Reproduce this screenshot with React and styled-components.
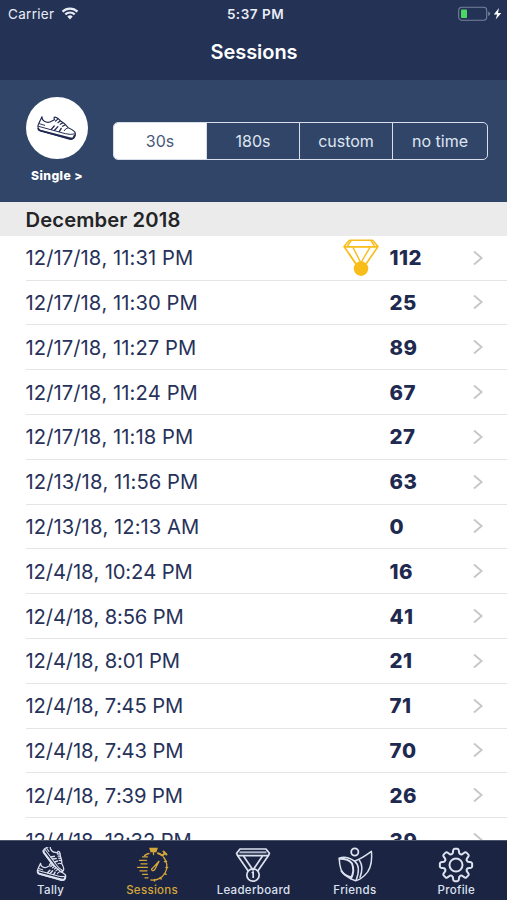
import React from "react";
import styled, { createGlobalStyle, ThemeProvider } from "styled-components";

const theme = {
  font: `Inter, "Liberation Sans", sans-serif`,
  colors: {
    header: "#243255",
    panel: "#314569",
    tabBar: "#1b2442",
    text: "#27325a",
    score: "#1f2a50",
    gold: "#f8bd18",
    activeTab: "#d5a63a",
    tab: "#dce2ef",
    white: "#ffffff"
  }
};

const sessions = [
  { date: "12/17/18, 11:31 PM", score: 112, best: true },
  { date: "12/17/18, 11:30 PM", score: 25 },
  { date: "12/17/18, 11:27 PM", score: 89 },
  { date: "12/17/18, 11:24 PM", score: 67 },
  { date: "12/17/18, 11:18 PM", score: 27 },
  { date: "12/13/18, 11:56 PM", score: 63 },
  { date: "12/13/18, 12:13 AM", score: 0 },
  { date: "12/4/18, 10:24 PM", score: 16 },
  { date: "12/4/18, 8:56 PM", score: 41 },
  { date: "12/4/18, 8:01 PM", score: 21 },
  { date: "12/4/18, 7:45 PM", score: 71 },
  { date: "12/4/18, 7:43 PM", score: 70 },
  { date: "12/4/18, 7:39 PM", score: 26 },
  { date: "12/4/18, 12:32 PM", score: 39 }
];

const durations = ["30s", "180s", "custom", "no time"];

const GlobalStyle = createGlobalStyle`
  * {
    box-sizing: border-box;
  }

  body {
    margin: 0;
    overflow: hidden;
  }

  svg {
    display: block;
    flex: none;
  }
`;

const Screen = styled.div`
  display: flex;
  flex-direction: column;
  width: 507px;
  height: 900px;
  overflow: hidden;
  background: ${props => props.theme.colors.white};
  font-family: ${props => props.theme.font};
`;

const Header = styled.header`
  flex: none;
  height: 80px;
  color: ${props => props.theme.colors.white};
  background: ${props => props.theme.colors.header};
`;

const StatusBar = styled.div`
  display: grid;
  grid-template-columns: 1fr auto 1fr;
  align-items: center;
  height: 27px;
  padding: 0 5px 0 8px;
  font-size: 13.5px;
  color: #e9edf6;
`;

const Carrier = styled.div`
  display: flex;
  align-items: center;
  gap: 7px;
  letter-spacing: 0.3px;
`;

const Clock = styled.div`
  padding-left: 1px;
  font-weight: 600;
  letter-spacing: 0.5px;
`;

const Power = styled.div`
  display: flex;
  justify-content: flex-end;
`;

const Title = styled.h1`
  margin: 0;
  padding-left: 1px;
  font-size: 20px;
  font-weight: 600;
  line-height: 50px;
  letter-spacing: -0.05px;
  text-align: center;
`;

const FilterPanel = styled.section`
  display: flex;
  flex: none;
  height: 121.5px;
  padding: 17px 19px 0 26px;
  background: ${props => props.theme.colors.panel};
`;

const ModeButton = styled.button`
  display: flex;
  flex-direction: column;
  align-items: center;
  width: 62px;
  padding: 0;
  border: 0;
  background: none;
  color: ${props => props.theme.colors.white};
  font: 800 12.2px/16px ${props => props.theme.font};
  letter-spacing: 0.4px;
  white-space: nowrap;
`;

const ModeCircle = styled.span`
  display: flex;
  align-items: center;
  justify-content: center;
  width: 62px;
  height: 62px;
  margin-bottom: 9px;
  border-radius: 50%;
  background: ${props => props.theme.colors.white};
`;

const Segments = styled.div`
  display: grid;
  grid-template-columns: 92px 93px 93px 1fr;
  flex: 1;
  height: 38px;
  margin: 25px 0 0 25px;
  overflow: hidden;
  border: 1.5px solid #d9dfea;
  border-radius: 5px;
`;

const Segment = styled.button`
  padding: 0;
  border: 0;
  border-left: ${props => (props.$first ? "0" : "1.5px solid #d9dfea")};
  background: ${props => (props.$active ? props.theme.colors.white : "transparent")};
  color: ${props => (props.$active ? "#485879" : "#dfe6f2")};
  font: 400 16px/1 ${props => props.theme.font};
`;

const MonthHeading = styled.h2`
  flex: none;
  height: 34px;
  margin: 0;
  padding-left: 25.5px;
  background: #ebebeb;
  color: #242426;
  font-size: 20.2px;
  font-weight: 600;
  line-height: 36px;
  letter-spacing: 0.12px;
`;

const SessionList = styled.ul`
  flex: 1;
  min-height: 0;
  margin: 0;
  padding: 0.3px 0 0 25.5px;
  overflow: hidden;
  list-style: none;
`;

const SessionRow = styled.li`
  display: grid;
  grid-template-columns: 317px 47px 83px 1fr;
  align-items: center;
  height: 44.8px;
  border-bottom: 1px solid #e5e5e8;
  color: ${props => props.theme.colors.text};
  font-kerning: none;
`;

const SessionDate = styled.span`
  font-size: 20.2px;
  letter-spacing: ${props => (props.$long ? "0.06px" : "-0.13px")};
`;

const Score = styled.strong`
  color: ${props => props.theme.colors.score};
  font-size: 20.4px;
  font-weight: 800;
  letter-spacing: 0.5px;
`;

const TabBar = styled.nav`
  display: grid;
  grid-template-columns: repeat(5, 1fr);
  flex: none;
  height: 60px;
  border-top: 1px solid #4c536b;
  background: ${props => props.theme.colors.tabBar};
`;

const Tab = styled.button`
  display: flex;
  flex-direction: column;
  align-items: center;
  padding: 6px 0 0;
  border: 0;
  background: none;
  color: ${props => (props.$active ? props.theme.colors.activeTab : props.theme.colors.tab)};
  font: 500 11.5px/14px ${props => props.theme.font};
  letter-spacing: 0.3px;
`;

const TabIcon = styled.span`
  height: 36px;
`;

const WifiIcon = () => (
  <svg width="18" height="13" viewBox="0 0 17 13" fill="none" stroke="currentColor" strokeWidth="2.2">
    <path d="M1 4.6a10.8 10.8 0 0 1 15 0M3.8 7.4a6.8 6.8 0 0 1 9.4 0" />
    <path d="M5.8 9.6a4 4 0 0 1 5.4 0L8.5 12.4Z" fill="currentColor" stroke="none" />
  </svg>
);

const BatteryIcon = () => (
  <svg width="44" height="16" viewBox="0 0 44 16">
    <rect x="0.7" y="1.2" width="28" height="13" rx="3.2" fill="none" stroke="#77819a" strokeWidth="1.1" />
    <path d="M30.2 5.5V10q2-.8 2-2.25T30.2 5.5Z" fill="#77819a" />
    <rect x="3" y="3.5" width="6" height="8.5" rx="0.8" fill="#4bd763" />
    <path d="M41 2 35.8 8.4h3.3l-1.4 5L43.3 6.9H40Z" fill="#fff" />
  </svg>
);

// Sneaker outline shared by the mode button and the Tally tab
const ShoeShape = ({ weight = 1, fill = "none" }) => (
  <g fill="none" stroke="currentColor" strokeLinecap="round" strokeLinejoin="round">
    <path
      fill={fill}
      strokeWidth={3 * weight}
      d="M68 78q0 10 7 14c9 5 17 3 23-1l8-4c-4-5-1-9 4-7q7 2 13 10l14 10 10 11q13 5 19 12c4 4 3 9 1 14l-5 6q-4 4-11 3L63 120q-5-1-6-6-4-7 1-15Z"
    />
    <path strokeWidth={5 * weight} d="M57 114q1 4 6 6l88 23q8 2 12-1l3-7" />
    <path strokeWidth={2.5 * weight} d="m58 107 80 22q15 4 28 1M60 99l16 5M145 112q-6 1-10 8" />
    <path strokeWidth={3.5 * weight} d="m105 106-9 10M116 108l-10 11M126 113l-6 10" />
    <path strokeWidth={3 * weight} d="m115 86-6 5M123 91l-7 5M130 97l-7 4M137 103l-7 4" />
  </g>
);

const ShoeIcon = () => (
  <svg width="41.5" height="28" viewBox="50 70 125 84" color="#202950">
    <ShoeShape weight={1.15} />
  </svg>
);

const MedalIcon = () => (
  <svg width="36" height="38" viewBox="0 0 36 38" fill="none" stroke={theme.colors.gold} strokeWidth="1.6" strokeLinejoin="round">
    <path d="M6.5 1.3h23L35 7.5 22 26.5M6.5 1.3 1 7.5l13 19M1.4 7.9h33.2" />
    <path d="m10 8.4 7.8 15.4L27 8.4M12.5 24.2 6 14.5M8 1.8 4.5 7M28 1.8 31.5 7" strokeWidth="1.4" />
    <circle cx="18" cy="29.6" r="7.3" fill={theme.colors.gold} stroke="none" />
  </svg>
);

const Chevron = () => (
  <svg width="12" height="16" viewBox="0 0 12 16" fill="none" stroke="#c7c7cb" strokeWidth="1.9">
    <path d="M1 1.5 8.6 8 1 14.5" />
  </svg>
);

const TallyIcon = () => (
  <svg width="36" height="36" viewBox="0 0 36 36">
    <g transform="translate(21.8 11.6) rotate(38) scale(.25) translate(-112 -112)">
      <ShoeShape weight={1.7} />
    </g>
    <g transform="translate(-9.4 -3.2) scale(.25)">
      <ShoeShape weight={1.7} fill={theme.colors.tabBar} />
    </g>
  </svg>
);

const StopwatchIcon = () => (
  <svg width="36" height="36" viewBox="0 0 36 36" fill="none" stroke="currentColor" strokeWidth="1.3" strokeLinecap="round">
    <path d="M16 1.5h7l-1 3h-5ZM19.5 4.5v3" fill="currentColor" />
    <path d="m29.5 4.5 3 3M30.5 6.5l-2 2M24 6.2q2.2.7 4.2 2.3" strokeWidth="2" />
    <path d="M29.5 10a14 14 0 0 1-12.5 23M10.5 8.6q2.2-1.6 4.5-2.1" />
    <path d="M30.5 14.5h2M32 20.5h1.6M30.5 26.5l1.6.8M26.2 30.6l1 1.4M20.5 32.5v1.6" strokeWidth="1.5" />
    <path d="M18.4 21.4 25.2 14l-4.6 8.8q-1.4 1.4-2.6.4-1-1 .4-1.8Z" />
    <path d="M8.5 9.8h5M5.5 13.3h7M7 16.8h6M3.5 20.3h10M6 23.8h7M8.5 27.3h5M11 30.8h3" />
  </svg>
);

const LeaderboardIcon = () => (
  <svg width="36" height="36" viewBox="0 0 36 36" fill="none" stroke="currentColor" strokeWidth="1.7" strokeLinejoin="round">
    <path d="M5 2h26l3.4 4.3-1.1 2.4H2.7L1.6 6.3Z" />
    <path d="M4.5 5.3h27" strokeWidth="2" opacity=".75" />
    <path d="m2.2 8 11 16M33.8 8l-11 16M8.5 9l9.5 14L27.5 9" />
    <circle cx="18" cy="28" r="6.2" />
    <path d="m16.8 26 1.4-1V31" strokeWidth="1.7" />
  </svg>
);

const FriendsIcon = () => (
  <svg width="36" height="36" viewBox="0 0 36 36" fill="none" stroke="currentColor" strokeWidth="1.5" strokeLinecap="round" strokeLinejoin="round">
    <circle cx="17.8" cy="5" r="3.6" strokeWidth="1.8" />
    <path d="M2.2 11.2Q9 8.4 17.5 14.2 25 11.5 34.4 4.4 36 21 27.5 28.5 22.5 33 18.5 33.7 12 31.5 7.8 28 2.7 24 2.2 11.2Z" />
    <path d="M2.5 11.8q9.5 0 12.5 4.7Q18 24 14 31.5M4.4 24q3.6 5 9.8 6.2" strokeWidth="2" />
    <path d="M17.5 14.2q6.8 5.3 1.7 18.8M22.5 13.4q4.5 6.8.5 16.8" />
  </svg>
);

const gearTeeth = Array.from({ length: 8 }, (_, i) => {
  const point = (degrees, radius) => {
    const angle = ((i * 45 + degrees - 90) * Math.PI) / 180;
    return `${(18 + radius * Math.cos(angle)).toFixed(2)} ${(18 + radius * Math.sin(angle)).toFixed(2)}`;
  };
  return `${i ? "L" : "M"}${point(-15, 12.4)} L${point(-10, 15.4)} Q${point(-8, 16.2)} ${point(-5, 16.2)} L${point(5, 16.2)} Q${point(8, 16.2)} ${point(10, 15.4)} L${point(15, 12.4)} Q${point(22.5, 11)} ${point(30, 12.4)}`;
}).join(" ");

const GearIcon = () => (
  <svg width="36" height="36" viewBox="0 0 36 36" fill="none" stroke="currentColor" strokeWidth="2" strokeLinejoin="round">
    <path d={`${gearTeeth}Z`} />
    <circle cx="18" cy="18" r="6.5" />
  </svg>
);

const tabs = [
  { label: "Tally", Icon: TallyIcon },
  { label: "Sessions", Icon: StopwatchIcon },
  { label: "Leaderboard", Icon: LeaderboardIcon },
  { label: "Friends", Icon: FriendsIcon },
  { label: "Profile", Icon: GearIcon }
];

const App = () => (
  <ThemeProvider theme={theme}>
    <GlobalStyle />
    <Screen>
      <Header>
        <StatusBar>
          <Carrier>
            Carrier
            <WifiIcon />
          </Carrier>
          <Clock>5:37 PM</Clock>
          <Power>
            <BatteryIcon />
          </Power>
        </StatusBar>
        <Title>Sessions</Title>
      </Header>
      <FilterPanel>
        <ModeButton>
          <ModeCircle>
            <ShoeIcon />
          </ModeCircle>
          Single &gt;
        </ModeButton>
        <Segments>
          {durations.map((duration, i) => (
            <Segment key={duration} $first={i === 0} $active={i === 0}>
              {duration}
            </Segment>
          ))}
        </Segments>
      </FilterPanel>
      <MonthHeading>December 2018</MonthHeading>
      <SessionList>
        {sessions.map(({ date, score, best }) => (
          <SessionRow key={date}>
            <SessionDate $long={date.length > 17}>{date}</SessionDate>
            <span>{best && <MedalIcon />}</span>
            <Score>{score}</Score>
            <Chevron />
          </SessionRow>
        ))}
      </SessionList>
      <TabBar>
        {tabs.map(({ label, Icon }) => (
          <Tab key={label} $active={label === "Sessions"}>
            <TabIcon>
              <Icon />
            </TabIcon>
            {label}
          </Tab>
        ))}
      </TabBar>
    </Screen>
  </ThemeProvider>
);

export default App;
